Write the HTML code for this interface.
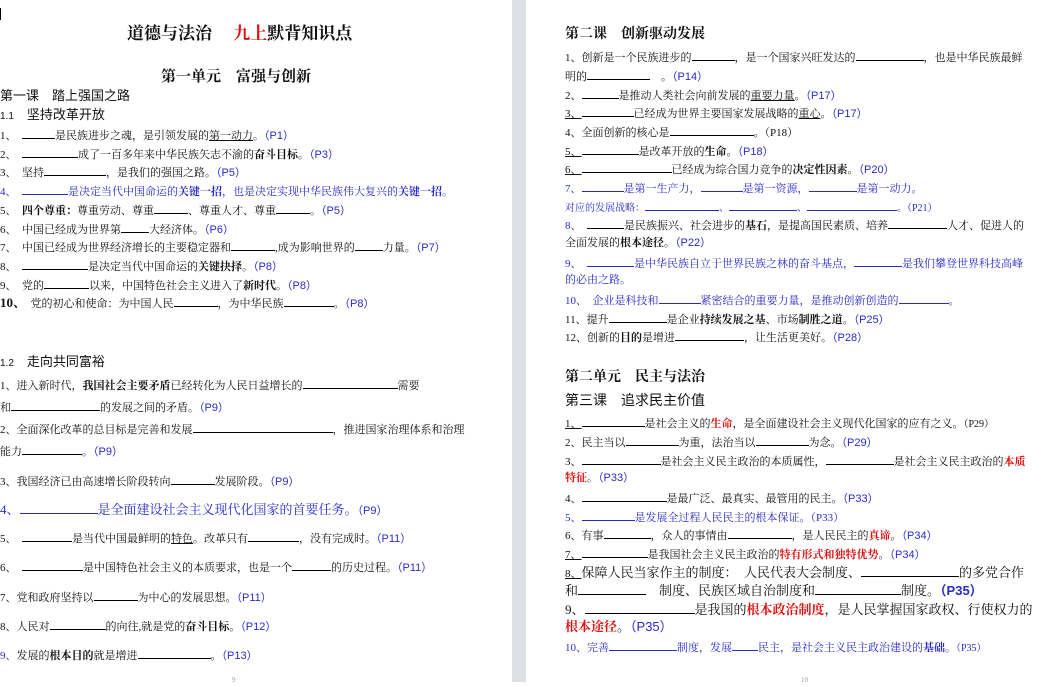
<!DOCTYPE html>
<html><head><meta charset="utf-8">
<style>
html,body{margin:0;padding:0;}
body{width:1064px;height:682px;position:relative;overflow:hidden;background:#fff;font-family:"Liberation Serif","Noto Serif CJK SC",serif;color:#111;}
.gap{position:absolute;left:512px;top:0;width:14px;height:682px;background:#dde1e6;}
.l{position:absolute;white-space:nowrap;font-size:11px;line-height:14px;}
.b{display:inline-block;border-bottom:1px solid #000;height:11px;vertical-align:baseline;}
.k{color:#2a2ac8;}
.kb{border-color:#2a2ac8;}
.r{color:#e01010;font-weight:bold;}
.p{color:#2a2ac8;font-family:"Liberation Sans","Noto Sans CJK SC",sans-serif;}
.s{font-weight:bold;}
.h{font-family:"Liberation Sans","Noto Sans CJK SC",sans-serif;}
</style></head><body>
<div class="gap"></div>
<div style="position:absolute;left:0;top:8px;width:1px;height:12px;background:#000"></div>

<!-- LEFT PAGE -->
<div class="l s" style="left:127px;top:24px;font-size:17px;line-height:20px">道德与法治　 <span style="color:#e01010">九上</span>默背知识点</div>
<div class="l s" style="left:161px;top:68px;font-size:15px;line-height:18px">第一单元　富强与创新</div>
<div class="l h" style="left:0;top:88px;font-size:13px;line-height:16px">第一课　踏上强国之路</div>
<div class="l h" style="left:0;top:107px;font-size:13px;line-height:16px"><span style="font-size:10px">1.1</span>　坚持改革开放</div>
<div class="l" style="left:0;top:127px">1、　<span class="b" style="width:33px"></span>是民族进步之魂，是引领发展的<u>第一动力</u>。<span class="p">（P1）</span></div>
<div class="l" style="left:0;top:146px">2、　<span class="b" style="width:56px"></span>成了一百多年来中华民族矢志不渝的<b>奋斗目标</b>。<span class="p">（P3）</span></div>
<div class="l" style="left:0;top:164px">3、　坚持<span class="b" style="width:62px"></span>，是我们的强国之路。<span class="p">（P5）</span></div>
<div class="l k" style="left:0;top:183px">4、　<span class="b kb" style="width:46px"></span>是决定当代中国命运的<b>关键一招</b>，也是决定实现中华民族伟大复兴的<b>关键一招</b>。</div>
<div class="l" style="left:0;top:202px">5、　<b>四个尊重：</b>尊重劳动、尊重<span class="b" style="width:34px"></span>、尊重人才、尊重<span class="b" style="width:34px"></span>。<span class="p">（P5）</span></div>
<div class="l" style="left:0;top:221px">6、　中国已经成为世界第<span class="b" style="width:28px"></span>大经济体。<span class="p">（P6）</span></div>
<div class="l" style="left:0;top:239px">7、　中国已经成为世界经济增长的主要稳定器和<span class="b" style="width:44px"></span>,成为影响世界的<span class="b" style="width:28px"></span>力量。<span class="p">（P7）</span></div>
<div class="l" style="left:0;top:258px">8、　<span class="b" style="width:66px"></span>是决定当代中国命运的<b>关键抉择</b>。<span class="p">（P8）</span></div>
<div class="l" style="left:0;top:277px">9、　党的<span class="b" style="width:45px"></span>以来，中国特色社会主义进入了<b>新时代</b>。<span class="p">（P8）</span></div>
<div class="l" style="left:0;top:295px"><b style="font-size:13px">10、</b>　党的初心和使命：为中国人民<span class="b" style="width:44px"></span>，为中华民族<span class="b" style="width:50px"></span>。<span class="p">（P8）</span></div>

<div class="l h" style="left:0;top:354px;font-size:13px;line-height:16px"><span style="font-size:10px">1.2</span>　走向共同富裕</div>
<div class="l" style="left:0;top:377px">1、进入新时代，<b>我国社会主要矛盾</b>已经转化为人民日益增长的<span class="b" style="width:95px"></span>需要</div>
<div class="l" style="left:0;top:399px">和<span class="b" style="width:89px"></span>的发展之间的矛盾。<span class="p">（P9）</span></div>
<div class="l" style="left:0;top:421px">2、全面深化改革的总目标是完善和发展<span class="b" style="width:140px"></span>，推进国家治理体系和治理</div>
<div class="l" style="left:0;top:443px">能力<span class="b" style="width:60px"></span>。<span class="p">（P9）</span></div>
<div class="l" style="left:0;top:473px">3、我国经济已由高速增长阶段转向<span class="b" style="width:44px"></span>发展阶段。<span class="p">（P9）</span></div>
<div class="l k" style="left:0;top:500px;font-size:13px;line-height:16px">4、<span class="b kb" style="width:78px;height:13px"></span>是全面建设社会主义现代化国家的首要任务。<span class="p" style="font-size:11px">（P9）</span></div>
<div class="l" style="left:0;top:530px">5、　<span class="b" style="width:50px"></span>是当代中国最鲜明的<u>特色</u>。改革只有<span class="b" style="width:51px"></span>，没有完成时。<span class="p">（P11）</span></div>
<div class="l" style="left:0;top:559px">6、　<span class="b" style="width:61px"></span>是中国特色社会主义的本质要求，也是一个<span class="b" style="width:39px"></span>的历史过程。<span class="p">（P11）</span></div>
<div class="l" style="left:0;top:589px">7、党和政府坚持以<span class="b" style="width:44px"></span>为中心的发展思想。<span class="p">（P11）</span></div>
<div class="l" style="left:0;top:618px">8、人民对<span class="b" style="width:56px"></span>的向往,就是党的<b>奋斗目标</b>。<span class="p">（P12）</span></div>
<div class="l" style="left:0;top:647px"><span class="k">9、</span>发展的<b>根本目的</b>就是增进<span class="b" style="width:73px"></span>。<span class="p">（P13）</span></div>
<div class="l" style="left:232px;top:673px;font-size:7px;color:#999">9</div>

<!-- RIGHT PAGE -->
<div class="l s" style="left:565px;top:26px;font-size:14px;line-height:17px">第二课　创新驱动发展</div>
<div class="l" style="left:565px;top:49px">1、创新是一个民族进步的<span class="b" style="width:43px"></span>，是一个国家兴旺发达的<span class="b" style="width:68px"></span>，也是中华民族最鲜</div>
<div class="l" style="left:565px;top:68px">明的<span class="b" style="width:63px"></span>　。<span class="p">（P14）</span></div>
<div class="l" style="left:565px;top:87px">2、<span class="b" style="width:37px"></span>是推动人类社会向前发展的<u>重要力量</u>。<span class="p">（P17）</span></div>
<div class="l" style="left:565px;top:105px"><u>3、</u><span class="b" style="width:52px"></span>已经成为世界主要国家发展战略的<u>重心</u>。<span class="p">（P17）</span></div>
<div class="l" style="left:565px;top:124px">4、全面创新的核心是<span class="b" style="width:84px"></span>。（P18）</div>
<div class="l" style="left:565px;top:143px"><u>5、</u><span class="b" style="width:57px"></span>是改革开放的<b>生命</b>。<span class="p">（P18）</span></div>
<div class="l" style="left:565px;top:161px"><u>6、</u><span class="b" style="width:90px"></span>已经成为综合国力竞争的<b>决定性因素</b>。<span class="p">（P20）</span></div>
<div class="l k" style="left:565px;top:180px">7、<span class="b kb" style="width:42px"></span>是第一生产力，<span class="b kb" style="width:42px"></span>是第一资源，<span class="b kb" style="width:48px"></span>是第一动力。</div>
<div class="l k" style="left:565px;top:199px;font-size:10px">对应的发展战略：<span class="b kb" style="width:74px"></span>、<span class="b kb" style="width:68px"></span>、<span class="b kb" style="width:90px"></span>。（P21）</div>
<div class="l" style="left:565px;top:217px"><span class="k">8、</span>　<span class="b" style="width:37px"></span>是民族振兴、社会进步的<b>基石</b>，是提高国民素质、培养<span class="b" style="width:59px"></span>人才、促进人的</div>
<div class="l" style="left:565px;top:236px">全面发展的<b>根本途径</b>。<span class="p">（P22）</span></div>
<div class="l k" style="left:565px;top:255px">9、　<span class="b kb" style="width:47px"></span>是中华民族自立于世界民族之林的奋斗基点，<span class="b kb" style="width:48px"></span>是我们攀登世界科技高峰</div>
<div class="l k" style="left:565px;top:273px">的必由之路。</div>
<div class="l k" style="left:565px;top:292px">10、　企业是科技和<span class="b kb" style="width:42px"></span>紧密结合的重要力量，是推动创新创造的<span class="b kb" style="width:50px"></span>。</div>
<div class="l" style="left:565px;top:311px">11、提升<span class="b" style="width:58px"></span>是企业<b>持续发展之基</b>、市场<b>制胜之道</b>。<span class="p">（P25）</span></div>
<div class="l" style="left:565px;top:329px">12、创新的<b>目的</b>是增进<span class="b" style="width:69px"></span>，让生活更美好。<span class="p">（P28）</span></div>

<div class="l s" style="left:565px;top:369px;font-size:14px;line-height:17px">第二单元　民主与法治</div>
<div class="l h" style="left:565px;top:392px;font-size:14px;line-height:17px">第三课　追求民主价值</div>
<div class="l" style="left:565px;top:415px"><u>1、</u><span class="b" style="width:63px"></span>是社会主义的<span class="r">生命</span>，是全面建设社会主义现代化国家的应有之义。<span style="font-size:10px">（P29）</span></div>
<div class="l" style="left:565px;top:434px">2、民主当以<span class="b" style="width:53px"></span>为重，法治当以<span class="b" style="width:53px"></span>为念。<span class="p">（P29）</span></div>
<div class="l" style="left:565px;top:453px">3、<span class="b" style="width:79px"></span>是社会主义民主政治的本质属性，<span class="b" style="width:68px"></span>是社会主义民主政治的<span class="r">本质</span></div>
<div class="l" style="left:565px;top:471px"><span class="r">特征</span>。<span class="p">（P33）</span></div>
<div class="l" style="left:565px;top:490px">4、<span class="b" style="width:85px"></span>是最广泛、最真实、最管用的民主。<span class="p">（P33）</span></div>
<div class="l k" style="left:565px;top:509px">5、<span class="b kb" style="width:53px"></span>是发展全过程人民民主的根本保证。（P33）</div>
<div class="l" style="left:565px;top:527px">6、有事<span class="b" style="width:47px"></span>，众人的事情由<span class="b" style="width:64px"></span>，是人民民主的<span class="r">真谛</span>。<span class="p">（P34）</span></div>
<div class="l" style="left:565px;top:546px"><u>7、</u><span class="b" style="width:66px"></span>是我国社会主义民主政治的<span class="r">特有形式和独特优势</span>。<span class="p">（P34）</span></div>
<div class="l" style="left:565px;top:563px;font-size:13px;line-height:16px"><u style="font-size:11px">8、</u>保障人民当家作主的制度：　人民代表大会制度、<span class="b" style="width:98px;height:13px"></span>的多党合作</div>
<div class="l" style="left:565px;top:581px;font-size:13px;line-height:16px">和<span class="b" style="width:68px;height:13px"></span>　制度、民族区域自治制度和<span class="b" style="width:86px;height:13px"></span>制度。<b class="p" style="font-size:13px">（P35）</b></div>
<div class="l" style="left:565px;top:600px;font-size:13px;line-height:16px">9、<span class="b" style="width:110px;height:13px"></span>是我国的<span class="r">根本政治制度</span>，是人民掌握国家政权、行使权力的</div>
<div class="l" style="left:565px;top:619px;font-size:13px;line-height:16px"><span class="r">根本途径</span>。<span class="p">（P35）</span></div>
<div class="l k" style="left:565px;top:639px">10、完善<span class="b kb" style="width:68px"></span>制度，发展<span class="b kb" style="width:26px"></span>民主，是社会主义民主政治建设的<b>基础</b>。<span style="font-size:10px">（P35）</span></div>
<div class="l" style="left:801px;top:673px;font-size:7px;color:#999">10</div>
</body></html>
